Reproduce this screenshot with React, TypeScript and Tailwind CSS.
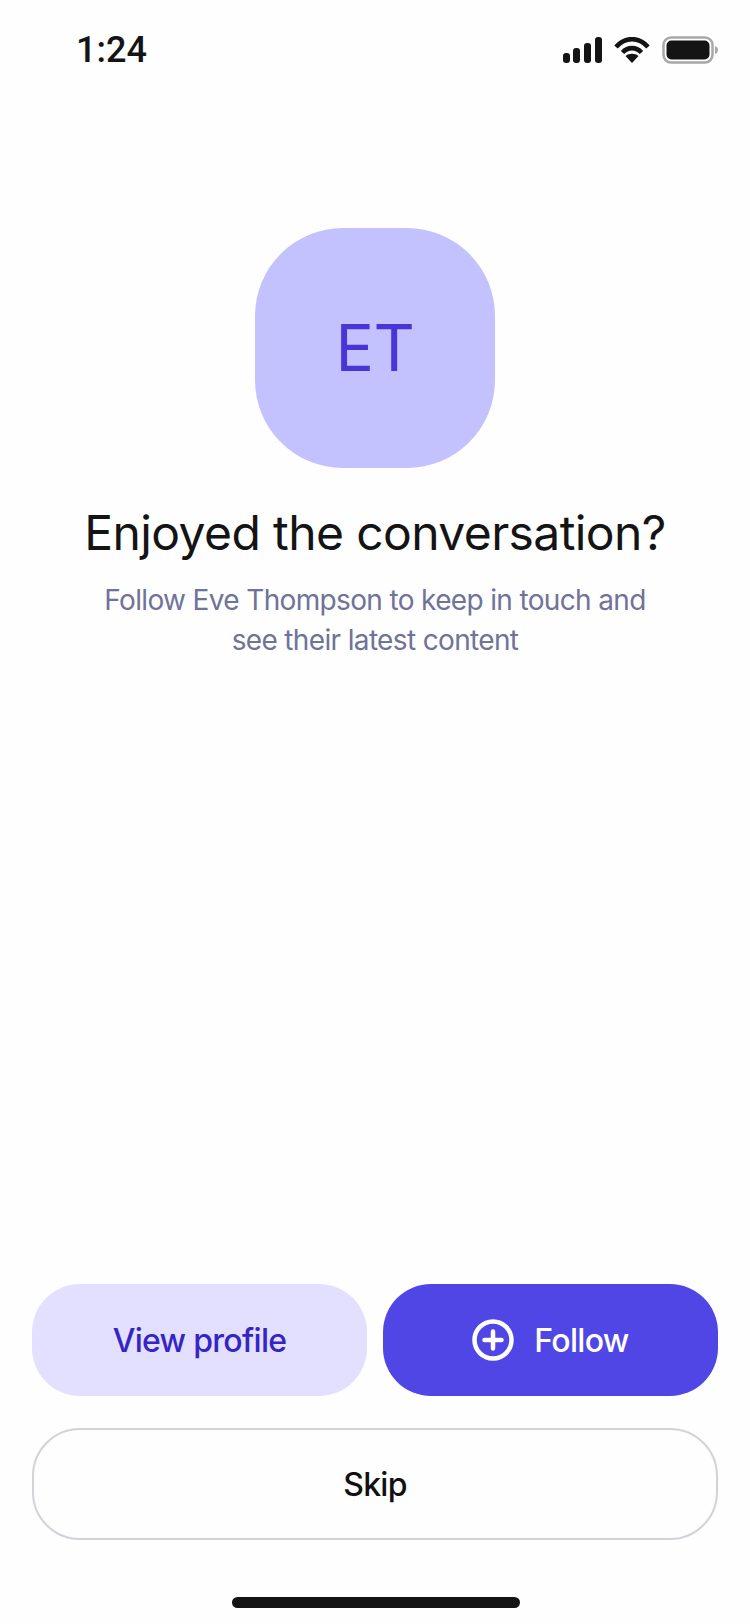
function StatusBar() {
  return (
    <div className="flex h-[100px] items-start justify-between pl-[76px] pr-[32px] pt-[30px]">
      <span className="font-['Roboto',sans-serif] text-[36px] font-medium leading-[40px] text-[#141414]">1:24</span>
      <div className="mt-[6px] flex items-center gap-[12px]">
        <svg width="40" height="26" viewBox="0 0 40 26" fill="#141414">
          <rect x="1" y="16" width="7" height="10" rx="3" />
          <rect x="11" y="11" width="7" height="15" rx="3" />
          <rect x="22" y="6" width="7" height="20" rx="3" />
          <rect x="33" y="0" width="7" height="26" rx="3" />
        </svg>
        <svg width="36" height="26" viewBox="0 0 36 26" fill="none" stroke="#141414" strokeWidth="4.6">
          <path d="M2 10C11-.5 25-.5 34 10" />
          <path d="M8.5 15.5c5.500-5.800 13.500-5.800 19 0" />
          <path d="M18 26l-6.500-7c3.500-3 9.500-3 13 0z" fill="#141414" stroke="none" />
        </svg>
        <svg width="56" height="28" viewBox="0 0 56 28" fill="none">
          <rect x="1.500" y="1.500" width="49" height="25" rx="7.500" stroke="#a8a8a8" strokeWidth="2.500" />
          <rect x="4.500" y="4.500" width="43" height="19" rx="5" fill="#141414" />
          <path d="M53 10c1.800.5 3 2 3 4s-1.200 3.500-3 4z" fill="#a8a8a8" />
        </svg>
      </div>
    </div>
  );
}

function PlusCircle() {
  return (
    <svg width="42" height="42" viewBox="0 0 42 42" fill="none" stroke="#ffffff" strokeWidth="4.5" strokeLinecap="round">
      <circle cx="21" cy="21" r="18.500" />
      <path d="M21 12.500v17M12.500 21h17" />
    </svg>
  );
}

export default function App() {
  return (
    <div className="flex h-[1624px] w-[750px] flex-col bg-[#fefefe] font-['Inter',sans-serif]">
      <StatusBar />

      <div className="mt-[128px] flex flex-col items-center">
        <div className="flex h-[240px] w-[240px] items-center justify-center rounded-[88px] bg-[#c4c1ff]">
          <span className="text-[64px] font-normal leading-none tracking-[-0.5px] text-[#4636d6]">ET</span>
        </div>
        <h1 className="mt-[33px] text-[48px] font-normal leading-[64px] tracking-[-0.6px] text-[#141414]">Enjoyed the conversation?</h1>
        <p className="mt-[15px] w-[580px] text-center text-[28px] leading-[40px] tracking-[-0.65px] text-[#6f7398]">
          Follow Eve Thompson to keep in touch and see their latest content
        </p>
      </div>

      <div className="flex-1" />

      <div className="flex flex-col gap-[32px] px-[32px]">
        <div className="flex gap-[16px]">
          <button type="button" className="flex h-[112px] flex-1 items-center justify-center rounded-[48px] bg-[#e2dfff] pt-[2px] text-[32px] font-medium tracking-[-0.7px] text-[#3525c4]">
            View profile
          </button>
          <button type="button" className="flex h-[112px] flex-1 items-center justify-center gap-[20px] rounded-[48px] bg-[#4f46e5] text-[32px] font-medium tracking-[-0.7px] text-white">
            <PlusCircle />
            <span className="pt-[2px]">Follow</span>
          </button>
        </div>
        <button type="button" className="flex h-[112px] items-center justify-center rounded-[48px] border-2 border-[#d1d2da] pt-[2px] text-[32px] font-medium tracking-[-0.7px] text-[#111111]">
          Skip
        </button>
      </div>

      <div className="flex h-[84px] items-end justify-center pb-[16px] pl-[2px]">
        <div className="h-[11px] w-[288px] rounded-full bg-[#141414]" />
      </div>
    </div>
  );
}
